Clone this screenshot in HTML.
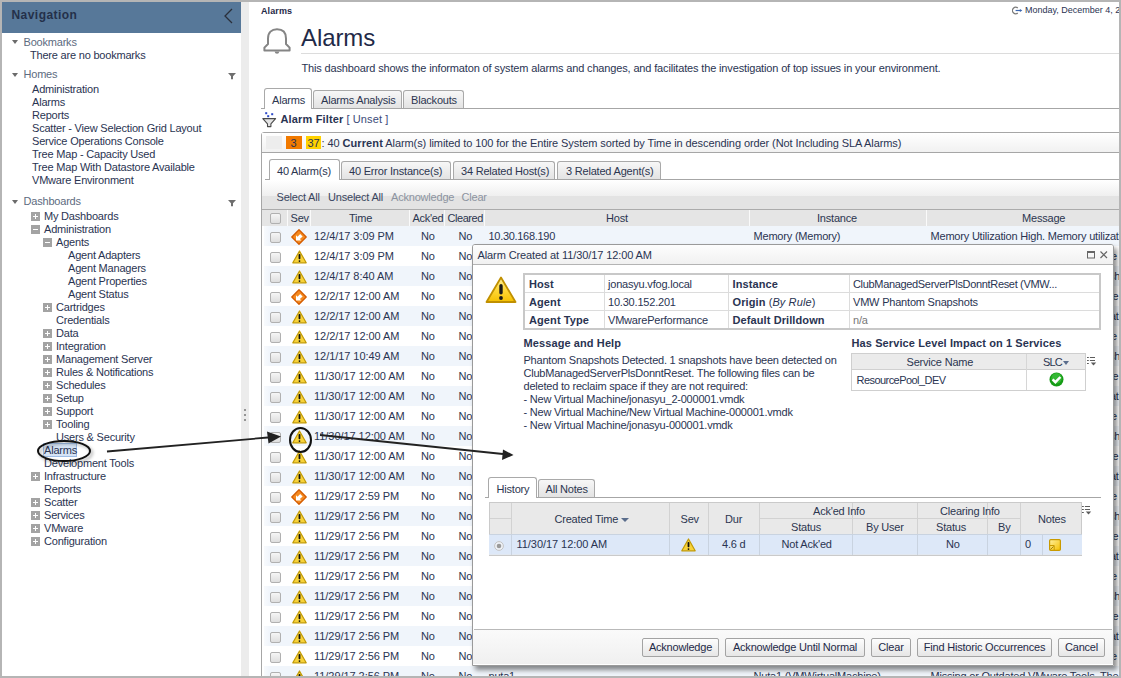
<!DOCTYPE html><html><head><meta charset="utf-8"><style>
*{margin:0;padding:0;box-sizing:border-box}
html,body{width:1121px;height:678px;overflow:hidden;background:#b5b5b5}
body{position:relative;font-family:"Liberation Sans",sans-serif;font-size:11px;color:#2a3452;letter-spacing:-0.2px}
.a{position:absolute}
.t{position:absolute;white-space:nowrap;line-height:13px}
.b,b{font-weight:bold;letter-spacing:0.1px}
.g{color:#5d6b80}
.pm{position:absolute;width:9px;height:9px;background:#a3a3a3}
.pm:before{content:"";position:absolute;left:2px;top:4px;width:5px;height:1px;background:#fff}
.pm.p:after{content:"";position:absolute;left:4px;top:2px;width:1px;height:5px;background:#fff}
.tri{position:absolute;width:0;height:0;border-left:3.5px solid transparent;border-right:3.5px solid transparent;border-top:4px solid #6b6b6b}

.chk{position:absolute;width:11px;height:11px;border:1px solid #b0b0b0;border-radius:2px;background:linear-gradient(#f6f6f6,#dedede)}
.tab{position:absolute;border:1px solid #a9a9a9;border-bottom:none;border-radius:3px 3px 0 0;background:linear-gradient(#f7f7f7,#e3e3e3);color:#2c3650}
.tab.on{background:linear-gradient(#fff,#fff);}
.hl{position:absolute;height:1px;background:#a6a6a6}
.vl{position:absolute;width:1px;background:#a6a6a6}
.btn{position:absolute;height:19px;border:1px solid #a3a3a3;border-radius:2px;background:linear-gradient(#fdfdfd,#e6e6e6);text-align:center;line-height:17px;color:#1f2a48}
</style></head><body>
<div class="a" style="left:2px;top:2px;width:1117px;height:674px;background:#fff"></div>
<div class="a" style="left:2px;top:2px;width:239px;height:31px;background:#577899"></div>
<div class="t b" style="left:11.5px;top:9px;font-size:12px;color:#24304a;letter-spacing:0.45px">Navigation</div>
<svg class="a" style="left:222px;top:7px" width="12" height="18"><path d="M10 2 L3 9 L10 16" fill="none" stroke="#2a2f3a" stroke-width="1.3"/></svg>
<div class="a" style="left:241px;top:2px;width:8px;height:674px;background:#ececec"></div>
<div class="a" style="left:244px;top:408.5px;width:2px;height:2px;background:#777;border-radius:1px"></div>
<div class="a" style="left:244px;top:413.5px;width:2px;height:2px;background:#777;border-radius:1px"></div>
<div class="a" style="left:244px;top:418.5px;width:2px;height:2px;background:#777;border-radius:1px"></div>
<div class="tri" style="left:12px;top:40px"></div>
<div class="t g" style="left:23.5px;top:36px;">Bookmarks</div>
<div class="t " style="left:30px;top:49px;">There are no bookmarks</div>
<div class="tri" style="left:12px;top:73px"></div>
<div class="t g" style="left:23.5px;top:68px;">Homes</div>
<div class="t " style="left:32px;top:83px;">Administration</div>
<div class="t " style="left:32px;top:96px;">Alarms</div>
<div class="t " style="left:32px;top:109px;">Reports</div>
<div class="t " style="left:32px;top:122px;">Scatter - View Selection Grid Layout</div>
<div class="t " style="left:32px;top:135px;">Service Operations Console</div>
<div class="t " style="left:32px;top:148px;">Tree Map - Capacity Used</div>
<div class="t " style="left:32px;top:161px;">Tree Map With Datastore Available</div>
<div class="t " style="left:32px;top:174px;">VMware Environment</div>
<div class="tri" style="left:12px;top:200px"></div>
<div class="t g" style="left:23.5px;top:195px;">Dashboards</div>
<svg class="a" style="left:228px;top:73px" width="9" height="7"><path d="M0 0 H8 L5 3.2 V6.2 H3 V3.2 Z" fill="#6e6e6e"/></svg>
<svg class="a" style="left:228px;top:200px" width="9" height="7"><path d="M0 0 H8 L5 3.2 V6.2 H3 V3.2 Z" fill="#6e6e6e"/></svg>
<div class="pm p" style="left:31px;top:212px"></div>
<div class="t " style="left:44px;top:210px;">My Dashboards</div>
<div class="pm m" style="left:31px;top:225px"></div>
<div class="t " style="left:44px;top:223px;">Administration</div>
<div class="pm m" style="left:43px;top:238px"></div>
<div class="t " style="left:56px;top:236px;">Agents</div>
<div class="t " style="left:68px;top:249px;">Agent Adapters</div>
<div class="t " style="left:68px;top:262px;">Agent Managers</div>
<div class="t " style="left:68px;top:275px;">Agent Properties</div>
<div class="t " style="left:68px;top:288px;">Agent Status</div>
<div class="pm p" style="left:43px;top:303px"></div>
<div class="t " style="left:56px;top:301px;">Cartridges</div>
<div class="t " style="left:56px;top:314px;">Credentials</div>
<div class="pm p" style="left:43px;top:329px"></div>
<div class="t " style="left:56px;top:327px;">Data</div>
<div class="pm p" style="left:43px;top:342px"></div>
<div class="t " style="left:56px;top:340px;">Integration</div>
<div class="pm p" style="left:43px;top:355px"></div>
<div class="t " style="left:56px;top:353px;">Management Server</div>
<div class="pm p" style="left:43px;top:368px"></div>
<div class="t " style="left:56px;top:366px;">Rules &amp; Notifications</div>
<div class="pm p" style="left:43px;top:381px"></div>
<div class="t " style="left:56px;top:379px;">Schedules</div>
<div class="pm p" style="left:43px;top:394px"></div>
<div class="t " style="left:56px;top:392px;">Setup</div>
<div class="pm p" style="left:43px;top:407px"></div>
<div class="t " style="left:56px;top:405px;">Support</div>
<div class="pm p" style="left:43px;top:420px"></div>
<div class="t " style="left:56px;top:418px;">Tooling</div>
<div class="t " style="left:56px;top:431px;">Users &amp; Security</div>
<div class="a" style="left:43px;top:443px;width:34px;height:14px;background:#d5e3f5;border:1px solid #9dbde6"></div>
<div class="t " style="left:44px;top:444px;">Alarms</div>
<div class="t " style="left:44px;top:457px;">Development Tools</div>
<div class="pm p" style="left:31px;top:472px"></div>
<div class="t " style="left:44px;top:470px;">Infrastructure</div>
<div class="t " style="left:44px;top:483px;">Reports</div>
<div class="pm p" style="left:31px;top:498px"></div>
<div class="t " style="left:44px;top:496px;">Scatter</div>
<div class="pm p" style="left:31px;top:511px"></div>
<div class="t " style="left:44px;top:509px;">Services</div>
<div class="pm p" style="left:31px;top:524px"></div>
<div class="t " style="left:44px;top:522px;">VMware</div>
<div class="pm p" style="left:31px;top:537px"></div>
<div class="t " style="left:44px;top:535px;">Configuration</div>
<div class="t b" style="left:261px;top:4.5px;font-size:9px;color:#1f2a48;letter-spacing:0.1px">Alarms</div>
<svg class="a" style="left:1012px;top:6px" width="11" height="9" viewBox="0 0 11 9"><path d="M5.8 2 A3.2 3.3 0 1 0 5.8 7" fill="none" stroke="#7a7a7a" stroke-width="1.2"/><path d="M3.6 4.5 H8.5" stroke="#3a66b0" stroke-width="1.2"/><path d="M7.9 2.9 L10.3 4.5 L7.9 6.1 Z" fill="#3a66b0"/></svg>
<div class="t" style="left:1025px;top:3.7px;font-size:9px;letter-spacing:0px">Monday, December 4, 2017</div>
<svg class="a" style="left:262px;top:27px" width="30" height="28" viewBox="0 0 30 28"><path d="M6 17 V11.5 C6 5.5 9.5 2.3 15 2.3 C20.5 2.3 24 5.5 24 11.5 V17 L27.6 20.6 V23.6 H2.4 V20.6 Z" fill="none" stroke="#858585" stroke-width="2" stroke-linejoin="round"/><path d="M12.6 24.4 H17.4 Q17 26.8 15 26.8 Q13 26.8 12.6 24.4 Z" fill="#858585"/></svg>
<div class="t" style="left:301px;top:25px;font-size:24px;line-height:26px;color:#1f2a48;letter-spacing:-0.1px">Alarms</div>
<div class="hl" style="left:301px;top:53px;width:818px;background:#dcdcdc"></div>
<div class="t " style="left:301.5px;top:61.5px;letter-spacing:-0.15px">This dashboard shows the informaton of system alarms and changes, and facilitates the investigation of top issues in your environment.</div>
<div class="hl" style="left:261px;top:108px;width:858px"></div>
<div class="tab on" style="left:264px;top:88px;width:48px;height:21px"></div>
<div class="tab" style="left:313px;top:90px;width:89px;height:18px"></div>
<div class="tab" style="left:403px;top:90px;width:61px;height:18px"></div>
<div class="t " style="left:272px;top:94px;color:#2c3650">Alarms</div>
<div class="t " style="left:321px;top:94px;color:#2c3650">Alarms Analysis</div>
<div class="t " style="left:411px;top:94px;color:#2c3650">Blackouts</div>
<svg class="a" style="left:262px;top:111px" width="15" height="17" viewBox="0 0 15 17"><rect x="3.2" y="1.2" width="2" height="2" fill="#2a48c8"/><rect x="5.2" y="4.2" width="2" height="2" fill="#2a48c8"/><rect x="9.2" y="2.2" width="2" height="2" fill="#2a48c8"/><path d="M0.8 7.6 H13.6 L8.9 12.9 V15.6 H5.5 V12.9 Z" fill="#e4e4e4" stroke="#4a4a4a" stroke-width="1.1" stroke-linejoin="round"/></svg>
<div class="t " style="left:280.5px;top:113px;"><b style="letter-spacing:0.15px">Alarm Filter</b></div>
<div class="t " style="left:346.5px;top:113px;color:#3b4a78;letter-spacing:0.1px">[ Unset ]</div>
<div class="a" style="left:261px;top:132px;width:870px;height:560px;border:1px solid #a6a6a6;border-radius:3px 0 0 0"></div>
<div class="a" style="left:262px;top:133px;width:857px;height:19px;background:linear-gradient(#fff,#f1f1f1)"></div>
<div class="hl" style="left:262px;top:152px;width:857px"></div>
<div class="a" style="left:266px;top:136px;width:16px;height:13px;background:#ededed"></div>
<div class="a" style="left:286px;top:136px;width:16px;height:13px;background:#f17a00"></div>
<div class="a" style="left:306px;top:136px;width:15px;height:13px;background:#ffd200"></div>
<div class="t " style="left:290.5px;top:136.5px;">3</div>
<div class="t " style="left:307.5px;top:136.5px;">37</div>
<div class="t " style="left:321.5px;top:136.5px;letter-spacing:-0.085px">: 40 <b>Current</b> Alarm(s) limited to 100 for the Entire System sorted by Time in descending order (Not Including SLA Alarms)</div>
<div class="hl" style="left:265px;top:179px;width:854px"></div>
<div class="tab on" style="left:269px;top:159px;width:71px;height:21px"></div>
<div class="tab" style="left:341px;top:161px;width:110px;height:18px"></div>
<div class="tab" style="left:453px;top:161px;width:102px;height:18px"></div>
<div class="tab" style="left:557px;top:161px;width:104px;height:18px"></div>
<div class="t " style="left:277px;top:165px;color:#2c3650">40 Alarm(s)</div>
<div class="t " style="left:349px;top:164.5px;color:#2c3650">40 Error Instance(s)</div>
<div class="t " style="left:461px;top:164.5px;color:#2c3650">34 Related Host(s)</div>
<div class="t " style="left:566px;top:164.5px;color:#2c3650">3 Related Agent(s)</div>
<div class="a" style="left:262px;top:180px;width:857px;height:16px;background:linear-gradient(#fff,#efefef)"></div>
<div class="a" style="left:262px;top:196px;width:857px;height:13px;background:#e3e3e3"></div>
<div class="hl" style="left:262px;top:209px;width:857px;background:#ababab"></div>
<div class="t " style="left:276.5px;top:191px;color:#3a4660">Select All</div>
<div class="t " style="left:328px;top:191px;color:#3a4660">Unselect All</div>
<div class="t " style="left:391px;top:191px;color:#8c93a0">Acknowledge</div>
<div class="t " style="left:461.5px;top:191px;color:#8c93a0">Clear</div>
<div class="a" style="left:262px;top:210px;width:857px;height:16px;background:#e5e5e5"></div>
<div class="a" style="left:287px;top:210px;width:1px;height:16px;background:#fafafa"></div>
<div class="a" style="left:310px;top:210px;width:1px;height:16px;background:#fafafa"></div>
<div class="a" style="left:409px;top:210px;width:1px;height:16px;background:#fafafa"></div>
<div class="a" style="left:444px;top:210px;width:1px;height:16px;background:#fafafa"></div>
<div class="a" style="left:484px;top:210px;width:1px;height:16px;background:#fafafa"></div>
<div class="a" style="left:749px;top:210px;width:1px;height:16px;background:#fafafa"></div>
<div class="a" style="left:926px;top:210px;width:1px;height:16px;background:#fafafa"></div>
<div class="chk" style="left:270px;top:213px"></div>
<div class="t " style="left:290.5px;top:211.5px;color:#2c3650">Sev</div>
<div class="t " style="left:349px;top:211.5px;color:#2c3650">Time</div>
<div class="t " style="left:412.5px;top:211.5px;color:#2c3650;letter-spacing:-0.3px">Ack'ed</div>
<div class="t " style="left:447.5px;top:211.5px;color:#2c3650;letter-spacing:-0.45px">Cleared</div>
<div class="t " style="left:606px;top:211.5px;color:#2c3650">Host</div>
<div class="t " style="left:817px;top:211.5px;color:#2c3650">Instance</div>
<div class="t " style="left:1022px;top:211.5px;color:#2c3650">Message</div>
<div class="a" style="left:264px;top:226px;width:855px;height:20px;background:linear-gradient(90deg,#f8fafd,#f0f5fb 6px)"></div>
<div class="chk" style="left:270px;top:232px"></div>
<svg class="a" style="left:291px;top:229px" width="16" height="16" viewBox="0 0 16 16"><path d="M8 0.8 L15.2 8 L8 15.2 L0.8 8 Z" fill="#f58a1f" stroke="#d45c00" stroke-width="1.3" stroke-linejoin="round"/><path d="M5 6.2 L5 11.6 L10.4 11.6 L8.9 10.1 L11.6 7.4 L9.2 5 L6.5 7.7 Z" fill="#fff"/></svg>
<div class="t " style="left:314px;top:229.5px;letter-spacing:-0.05px">12/4/17 3:09 PM</div>
<div class="t " style="left:421px;top:229.5px;">No</div>
<div class="t " style="left:458.5px;top:229.5px;">No</div>
<div class="chk" style="left:270px;top:252px"></div>
<svg class="a" style="left:292px;top:250px" width="15" height="14" viewBox="0 0 15 14"><path d="M7.5 1 L14.2 12.8 H0.8 Z" fill="#f7d23a" stroke="#c29a05" stroke-width="1.2" stroke-linejoin="round"/><rect x="6.6" y="4" width="1.8" height="5.2" rx="0.8" fill="#111"/><rect x="6.6" y="10.2" width="1.8" height="1.8" rx="0.9" fill="#111"/></svg>
<div class="t " style="left:314px;top:249.5px;letter-spacing:-0.05px">12/4/17 3:09 PM</div>
<div class="t " style="left:421px;top:249.5px;">No</div>
<div class="t " style="left:458.5px;top:249.5px;">No</div>
<div class="t " style="left:930.5px;top:249.5px;">Snapshot age exceeds threshold on the virtual machine</div>
<div class="a" style="left:264px;top:266px;width:855px;height:20px;background:linear-gradient(90deg,#f8fafd,#f0f5fb 6px)"></div>
<div class="chk" style="left:270px;top:272px"></div>
<svg class="a" style="left:292px;top:270px" width="15" height="14" viewBox="0 0 15 14"><path d="M7.5 1 L14.2 12.8 H0.8 Z" fill="#f7d23a" stroke="#c29a05" stroke-width="1.2" stroke-linejoin="round"/><rect x="6.6" y="4" width="1.8" height="5.2" rx="0.8" fill="#111"/><rect x="6.6" y="10.2" width="1.8" height="1.8" rx="0.9" fill="#111"/></svg>
<div class="t " style="left:314px;top:269.5px;letter-spacing:-0.05px">12/4/17 8:40 AM</div>
<div class="t " style="left:421px;top:269.5px;">No</div>
<div class="t " style="left:458.5px;top:269.5px;">No</div>
<div class="t " style="left:930.5px;top:269.5px;">Phantom Snapshots Detected. 1 snapshots have</div>
<div class="chk" style="left:270px;top:292px"></div>
<svg class="a" style="left:291px;top:289px" width="16" height="16" viewBox="0 0 16 16"><path d="M8 0.8 L15.2 8 L8 15.2 L0.8 8 Z" fill="#f58a1f" stroke="#d45c00" stroke-width="1.3" stroke-linejoin="round"/><path d="M5 6.2 L5 11.6 L10.4 11.6 L8.9 10.1 L11.6 7.4 L9.2 5 L6.5 7.7 Z" fill="#fff"/></svg>
<div class="t " style="left:314px;top:289.5px;letter-spacing:-0.05px">12/2/17 12:00 AM</div>
<div class="t " style="left:421px;top:289.5px;">No</div>
<div class="t " style="left:458.5px;top:289.5px;">No</div>
<div class="t " style="left:930.5px;top:289.5px;">Missing or Outdated VMware Tools. The VMware tools xxx</div>
<div class="a" style="left:264px;top:306px;width:855px;height:20px;background:linear-gradient(90deg,#f8fafd,#f0f5fb 6px)"></div>
<div class="chk" style="left:270px;top:312px"></div>
<svg class="a" style="left:292px;top:310px" width="15" height="14" viewBox="0 0 15 14"><path d="M7.5 1 L14.2 12.8 H0.8 Z" fill="#f7d23a" stroke="#c29a05" stroke-width="1.2" stroke-linejoin="round"/><rect x="6.6" y="4" width="1.8" height="5.2" rx="0.8" fill="#111"/><rect x="6.6" y="10.2" width="1.8" height="1.8" rx="0.9" fill="#111"/></svg>
<div class="t " style="left:314px;top:309.5px;letter-spacing:-0.05px">12/2/17 12:00 AM</div>
<div class="t " style="left:421px;top:309.5px;">No</div>
<div class="t " style="left:458.5px;top:309.5px;">No</div>
<div class="t " style="left:930.5px;top:309.5px;">Memory Utilization High. Memory utilization</div>
<div class="chk" style="left:270px;top:332px"></div>
<svg class="a" style="left:292px;top:330px" width="15" height="14" viewBox="0 0 15 14"><path d="M7.5 1 L14.2 12.8 H0.8 Z" fill="#f7d23a" stroke="#c29a05" stroke-width="1.2" stroke-linejoin="round"/><rect x="6.6" y="4" width="1.8" height="5.2" rx="0.8" fill="#111"/><rect x="6.6" y="10.2" width="1.8" height="1.8" rx="0.9" fill="#111"/></svg>
<div class="t " style="left:314px;top:329.5px;letter-spacing:-0.05px">12/2/17 12:00 AM</div>
<div class="t " style="left:421px;top:329.5px;">No</div>
<div class="t " style="left:458.5px;top:329.5px;">No</div>
<div class="t " style="left:930.5px;top:329.5px;">Snapshot age exceeds threshold on the virtual machine</div>
<div class="a" style="left:264px;top:346px;width:855px;height:20px;background:linear-gradient(90deg,#f8fafd,#f0f5fb 6px)"></div>
<div class="chk" style="left:270px;top:352px"></div>
<svg class="a" style="left:292px;top:350px" width="15" height="14" viewBox="0 0 15 14"><path d="M7.5 1 L14.2 12.8 H0.8 Z" fill="#f7d23a" stroke="#c29a05" stroke-width="1.2" stroke-linejoin="round"/><rect x="6.6" y="4" width="1.8" height="5.2" rx="0.8" fill="#111"/><rect x="6.6" y="10.2" width="1.8" height="1.8" rx="0.9" fill="#111"/></svg>
<div class="t " style="left:314px;top:349.5px;letter-spacing:-0.05px">12/1/17 10:49 AM</div>
<div class="t " style="left:421px;top:349.5px;">No</div>
<div class="t " style="left:458.5px;top:349.5px;">No</div>
<div class="t " style="left:930.5px;top:349.5px;">Phantom Snapshots Detected. 1 snapshots have</div>
<div class="chk" style="left:270px;top:372px"></div>
<svg class="a" style="left:292px;top:370px" width="15" height="14" viewBox="0 0 15 14"><path d="M7.5 1 L14.2 12.8 H0.8 Z" fill="#f7d23a" stroke="#c29a05" stroke-width="1.2" stroke-linejoin="round"/><rect x="6.6" y="4" width="1.8" height="5.2" rx="0.8" fill="#111"/><rect x="6.6" y="10.2" width="1.8" height="1.8" rx="0.9" fill="#111"/></svg>
<div class="t " style="left:314px;top:369.5px;letter-spacing:-0.05px">11/30/17 12:00 AM</div>
<div class="t " style="left:421px;top:369.5px;">No</div>
<div class="t " style="left:458.5px;top:369.5px;">No</div>
<div class="t " style="left:930.5px;top:369.5px;">Missing or Outdated VMware Tools. The VMware tools xxx</div>
<div class="a" style="left:264px;top:386px;width:855px;height:20px;background:linear-gradient(90deg,#f8fafd,#f0f5fb 6px)"></div>
<div class="chk" style="left:270px;top:392px"></div>
<svg class="a" style="left:292px;top:390px" width="15" height="14" viewBox="0 0 15 14"><path d="M7.5 1 L14.2 12.8 H0.8 Z" fill="#f7d23a" stroke="#c29a05" stroke-width="1.2" stroke-linejoin="round"/><rect x="6.6" y="4" width="1.8" height="5.2" rx="0.8" fill="#111"/><rect x="6.6" y="10.2" width="1.8" height="1.8" rx="0.9" fill="#111"/></svg>
<div class="t " style="left:314px;top:389.5px;letter-spacing:-0.05px">11/30/17 12:00 AM</div>
<div class="t " style="left:421px;top:389.5px;">No</div>
<div class="t " style="left:458.5px;top:389.5px;">No</div>
<div class="t " style="left:930.5px;top:389.5px;">Memory Utilization High. Memory utilization</div>
<div class="chk" style="left:270px;top:412px"></div>
<svg class="a" style="left:292px;top:410px" width="15" height="14" viewBox="0 0 15 14"><path d="M7.5 1 L14.2 12.8 H0.8 Z" fill="#f7d23a" stroke="#c29a05" stroke-width="1.2" stroke-linejoin="round"/><rect x="6.6" y="4" width="1.8" height="5.2" rx="0.8" fill="#111"/><rect x="6.6" y="10.2" width="1.8" height="1.8" rx="0.9" fill="#111"/></svg>
<div class="t " style="left:314px;top:409.5px;letter-spacing:-0.05px">11/30/17 12:00 AM</div>
<div class="t " style="left:421px;top:409.5px;">No</div>
<div class="t " style="left:458.5px;top:409.5px;">No</div>
<div class="t " style="left:930.5px;top:409.5px;">Snapshot age exceeds threshold on the virtual machine</div>
<div class="a" style="left:264px;top:426px;width:855px;height:20px;background:linear-gradient(90deg,#f8fafd,#f0f5fb 6px)"></div>
<div class="chk" style="left:270px;top:432px"></div>
<svg class="a" style="left:292px;top:430px" width="15" height="14" viewBox="0 0 15 14"><path d="M7.5 1 L14.2 12.8 H0.8 Z" fill="#f7d23a" stroke="#c29a05" stroke-width="1.2" stroke-linejoin="round"/><rect x="6.6" y="4" width="1.8" height="5.2" rx="0.8" fill="#111"/><rect x="6.6" y="10.2" width="1.8" height="1.8" rx="0.9" fill="#111"/></svg>
<div class="t " style="left:314px;top:429.5px;letter-spacing:-0.05px">11/30/17 12:00 AM</div>
<div class="t " style="left:421px;top:429.5px;">No</div>
<div class="t " style="left:458.5px;top:429.5px;">No</div>
<div class="t " style="left:930.5px;top:429.5px;">Phantom Snapshots Detected. 1 snapshots have</div>
<div class="chk" style="left:270px;top:452px"></div>
<svg class="a" style="left:292px;top:450px" width="15" height="14" viewBox="0 0 15 14"><path d="M7.5 1 L14.2 12.8 H0.8 Z" fill="#f7d23a" stroke="#c29a05" stroke-width="1.2" stroke-linejoin="round"/><rect x="6.6" y="4" width="1.8" height="5.2" rx="0.8" fill="#111"/><rect x="6.6" y="10.2" width="1.8" height="1.8" rx="0.9" fill="#111"/></svg>
<div class="t " style="left:314px;top:449.5px;letter-spacing:-0.05px">11/30/17 12:00 AM</div>
<div class="t " style="left:421px;top:449.5px;">No</div>
<div class="t " style="left:458.5px;top:449.5px;">No</div>
<div class="t " style="left:930.5px;top:449.5px;">Missing or Outdated VMware Tools. The VMware tools xxx</div>
<div class="a" style="left:264px;top:466px;width:855px;height:20px;background:linear-gradient(90deg,#f8fafd,#f0f5fb 6px)"></div>
<div class="chk" style="left:270px;top:472px"></div>
<svg class="a" style="left:292px;top:470px" width="15" height="14" viewBox="0 0 15 14"><path d="M7.5 1 L14.2 12.8 H0.8 Z" fill="#f7d23a" stroke="#c29a05" stroke-width="1.2" stroke-linejoin="round"/><rect x="6.6" y="4" width="1.8" height="5.2" rx="0.8" fill="#111"/><rect x="6.6" y="10.2" width="1.8" height="1.8" rx="0.9" fill="#111"/></svg>
<div class="t " style="left:314px;top:469.5px;letter-spacing:-0.05px">11/30/17 12:00 AM</div>
<div class="t " style="left:421px;top:469.5px;">No</div>
<div class="t " style="left:458.5px;top:469.5px;">No</div>
<div class="t " style="left:930.5px;top:469.5px;">Memory Utilization High. Memory utilization</div>
<div class="chk" style="left:270px;top:492px"></div>
<svg class="a" style="left:291px;top:489px" width="16" height="16" viewBox="0 0 16 16"><path d="M8 0.8 L15.2 8 L8 15.2 L0.8 8 Z" fill="#f58a1f" stroke="#d45c00" stroke-width="1.3" stroke-linejoin="round"/><path d="M5 6.2 L5 11.6 L10.4 11.6 L8.9 10.1 L11.6 7.4 L9.2 5 L6.5 7.7 Z" fill="#fff"/></svg>
<div class="t " style="left:314px;top:489.5px;letter-spacing:-0.05px">11/29/17 2:59 PM</div>
<div class="t " style="left:421px;top:489.5px;">No</div>
<div class="t " style="left:458.5px;top:489.5px;">No</div>
<div class="t " style="left:930.5px;top:489.5px;">Snapshot age exceeds threshold on the virtual machine</div>
<div class="a" style="left:264px;top:506px;width:855px;height:20px;background:linear-gradient(90deg,#f8fafd,#f0f5fb 6px)"></div>
<div class="chk" style="left:270px;top:512px"></div>
<svg class="a" style="left:292px;top:510px" width="15" height="14" viewBox="0 0 15 14"><path d="M7.5 1 L14.2 12.8 H0.8 Z" fill="#f7d23a" stroke="#c29a05" stroke-width="1.2" stroke-linejoin="round"/><rect x="6.6" y="4" width="1.8" height="5.2" rx="0.8" fill="#111"/><rect x="6.6" y="10.2" width="1.8" height="1.8" rx="0.9" fill="#111"/></svg>
<div class="t " style="left:314px;top:509.5px;letter-spacing:-0.05px">11/29/17 2:56 PM</div>
<div class="t " style="left:421px;top:509.5px;">No</div>
<div class="t " style="left:458.5px;top:509.5px;">No</div>
<div class="t " style="left:930.5px;top:509.5px;">Phantom Snapshots Detected. 1 snapshots have</div>
<div class="chk" style="left:270px;top:532px"></div>
<svg class="a" style="left:292px;top:530px" width="15" height="14" viewBox="0 0 15 14"><path d="M7.5 1 L14.2 12.8 H0.8 Z" fill="#f7d23a" stroke="#c29a05" stroke-width="1.2" stroke-linejoin="round"/><rect x="6.6" y="4" width="1.8" height="5.2" rx="0.8" fill="#111"/><rect x="6.6" y="10.2" width="1.8" height="1.8" rx="0.9" fill="#111"/></svg>
<div class="t " style="left:314px;top:529.5px;letter-spacing:-0.05px">11/29/17 2:56 PM</div>
<div class="t " style="left:421px;top:529.5px;">No</div>
<div class="t " style="left:458.5px;top:529.5px;">No</div>
<div class="t " style="left:930.5px;top:529.5px;">Missing or Outdated VMware Tools. The VMware tools xxx</div>
<div class="a" style="left:264px;top:546px;width:855px;height:20px;background:linear-gradient(90deg,#f8fafd,#f0f5fb 6px)"></div>
<div class="chk" style="left:270px;top:552px"></div>
<svg class="a" style="left:292px;top:550px" width="15" height="14" viewBox="0 0 15 14"><path d="M7.5 1 L14.2 12.8 H0.8 Z" fill="#f7d23a" stroke="#c29a05" stroke-width="1.2" stroke-linejoin="round"/><rect x="6.6" y="4" width="1.8" height="5.2" rx="0.8" fill="#111"/><rect x="6.6" y="10.2" width="1.8" height="1.8" rx="0.9" fill="#111"/></svg>
<div class="t " style="left:314px;top:549.5px;letter-spacing:-0.05px">11/29/17 2:56 PM</div>
<div class="t " style="left:421px;top:549.5px;">No</div>
<div class="t " style="left:458.5px;top:549.5px;">No</div>
<div class="t " style="left:930.5px;top:549.5px;">Memory Utilization High. Memory utilization</div>
<div class="chk" style="left:270px;top:572px"></div>
<svg class="a" style="left:292px;top:570px" width="15" height="14" viewBox="0 0 15 14"><path d="M7.5 1 L14.2 12.8 H0.8 Z" fill="#f7d23a" stroke="#c29a05" stroke-width="1.2" stroke-linejoin="round"/><rect x="6.6" y="4" width="1.8" height="5.2" rx="0.8" fill="#111"/><rect x="6.6" y="10.2" width="1.8" height="1.8" rx="0.9" fill="#111"/></svg>
<div class="t " style="left:314px;top:569.5px;letter-spacing:-0.05px">11/29/17 2:56 PM</div>
<div class="t " style="left:421px;top:569.5px;">No</div>
<div class="t " style="left:458.5px;top:569.5px;">No</div>
<div class="t " style="left:930.5px;top:569.5px;">Snapshot age exceeds threshold on the virtual machine</div>
<div class="a" style="left:264px;top:586px;width:855px;height:20px;background:linear-gradient(90deg,#f8fafd,#f0f5fb 6px)"></div>
<div class="chk" style="left:270px;top:592px"></div>
<svg class="a" style="left:292px;top:590px" width="15" height="14" viewBox="0 0 15 14"><path d="M7.5 1 L14.2 12.8 H0.8 Z" fill="#f7d23a" stroke="#c29a05" stroke-width="1.2" stroke-linejoin="round"/><rect x="6.6" y="4" width="1.8" height="5.2" rx="0.8" fill="#111"/><rect x="6.6" y="10.2" width="1.8" height="1.8" rx="0.9" fill="#111"/></svg>
<div class="t " style="left:314px;top:589.5px;letter-spacing:-0.05px">11/29/17 2:56 PM</div>
<div class="t " style="left:421px;top:589.5px;">No</div>
<div class="t " style="left:458.5px;top:589.5px;">No</div>
<div class="t " style="left:930.5px;top:589.5px;">Phantom Snapshots Detected. 1 snapshots have</div>
<div class="chk" style="left:270px;top:612px"></div>
<svg class="a" style="left:292px;top:610px" width="15" height="14" viewBox="0 0 15 14"><path d="M7.5 1 L14.2 12.8 H0.8 Z" fill="#f7d23a" stroke="#c29a05" stroke-width="1.2" stroke-linejoin="round"/><rect x="6.6" y="4" width="1.8" height="5.2" rx="0.8" fill="#111"/><rect x="6.6" y="10.2" width="1.8" height="1.8" rx="0.9" fill="#111"/></svg>
<div class="t " style="left:314px;top:609.5px;letter-spacing:-0.05px">11/29/17 2:56 PM</div>
<div class="t " style="left:421px;top:609.5px;">No</div>
<div class="t " style="left:458.5px;top:609.5px;">No</div>
<div class="t " style="left:930.5px;top:609.5px;">Missing or Outdated VMware Tools. The VMware tools xxx</div>
<div class="a" style="left:264px;top:626px;width:855px;height:20px;background:linear-gradient(90deg,#f8fafd,#f0f5fb 6px)"></div>
<div class="chk" style="left:270px;top:632px"></div>
<svg class="a" style="left:292px;top:630px" width="15" height="14" viewBox="0 0 15 14"><path d="M7.5 1 L14.2 12.8 H0.8 Z" fill="#f7d23a" stroke="#c29a05" stroke-width="1.2" stroke-linejoin="round"/><rect x="6.6" y="4" width="1.8" height="5.2" rx="0.8" fill="#111"/><rect x="6.6" y="10.2" width="1.8" height="1.8" rx="0.9" fill="#111"/></svg>
<div class="t " style="left:314px;top:629.5px;letter-spacing:-0.05px">11/29/17 2:56 PM</div>
<div class="t " style="left:421px;top:629.5px;">No</div>
<div class="t " style="left:458.5px;top:629.5px;">No</div>
<div class="t " style="left:930.5px;top:629.5px;">Memory Utilization High. Memory utilization</div>
<div class="chk" style="left:270px;top:652px"></div>
<svg class="a" style="left:292px;top:650px" width="15" height="14" viewBox="0 0 15 14"><path d="M7.5 1 L14.2 12.8 H0.8 Z" fill="#f7d23a" stroke="#c29a05" stroke-width="1.2" stroke-linejoin="round"/><rect x="6.6" y="4" width="1.8" height="5.2" rx="0.8" fill="#111"/><rect x="6.6" y="10.2" width="1.8" height="1.8" rx="0.9" fill="#111"/></svg>
<div class="t " style="left:314px;top:649.5px;letter-spacing:-0.05px">11/29/17 2:56 PM</div>
<div class="t " style="left:421px;top:649.5px;">No</div>
<div class="t " style="left:458.5px;top:649.5px;">No</div>
<div class="t " style="left:930.5px;top:649.5px;">Snapshot age exceeds threshold on the virtual machine</div>
<div class="a" style="left:264px;top:666px;width:855px;height:20px;background:linear-gradient(90deg,#f8fafd,#f0f5fb 6px)"></div>
<div class="chk" style="left:270px;top:672px"></div>
<svg class="a" style="left:292px;top:670px" width="15" height="14" viewBox="0 0 15 14"><path d="M7.5 1 L14.2 12.8 H0.8 Z" fill="#f7d23a" stroke="#c29a05" stroke-width="1.2" stroke-linejoin="round"/><rect x="6.6" y="4" width="1.8" height="5.2" rx="0.8" fill="#111"/><rect x="6.6" y="10.2" width="1.8" height="1.8" rx="0.9" fill="#111"/></svg>
<div class="t " style="left:314px;top:669.5px;letter-spacing:-0.05px">11/29/17 2:56 PM</div>
<div class="t " style="left:421px;top:669.5px;">No</div>
<div class="t " style="left:458.5px;top:669.5px;">No</div>
<div class="t " style="left:488.5px;top:229.5px;letter-spacing:-0.3px">10.30.168.190</div>
<div class="t " style="left:753.5px;top:229.5px;">Memory (Memory)</div>
<div class="t " style="left:930.5px;top:229.5px;">Memory Utilization High. Memory utilization is above threshold</div>
<div class="t " style="left:488.5px;top:669.5px;">nuta1</div>
<div class="t " style="left:753.5px;top:669.5px;">Nuta1 (VMWirtualMachine)</div>
<div class="t " style="left:930.5px;top:669.5px;">Missing or Outdated VMware Tools. The VMware tools</div>
<div class="a" style="left:472px;top:244px;width:642px;height:422px;border-radius:3px 3px 0 0;box-shadow:3px 4px 5px rgba(0,0,0,0.45)"></div>
<div class="a" style="left:472px;top:244px;width:642px;height:422px;background:#fff;border:1px solid #9a9a9a;border-radius:3px 3px 0 0"></div>
<div class="a" style="left:473px;top:245px;width:640px;height:19px;background:linear-gradient(#fdfdfd,#f1f1f1);border-radius:2px 2px 0 0"></div>
<div class="hl" style="left:473px;top:264px;width:640px;background:#b4b4b4"></div>
<div class="t " style="left:477.5px;top:249px;letter-spacing:-0.1px">Alarm Created at 11/30/17 12:00 AM</div>
<svg class="a" style="left:1086px;top:250px" width="23" height="10"><rect x="1.5" y="1.5" width="7" height="6.5" fill="none" stroke="#666" stroke-width="1"/><rect x="1" y="1" width="8" height="2" fill="#666"/><path d="M14.5 1.5 L21 8 M21 1.5 L14.5 8" stroke="#666" stroke-width="1.2"/></svg>
<svg class="a" style="left:485px;top:276px" width="32" height="28" viewBox="0 0 32 28"><defs><linearGradient id="wg" x1="0" y1="0" x2="0" y2="1"><stop offset="0" stop-color="#fff3a0"/><stop offset="0.5" stop-color="#ffd83a"/><stop offset="1" stop-color="#f5c000"/></linearGradient></defs><path d="M16 1.5 L30.5 26 H1.5 Z" fill="url(#wg)" stroke="#c09000" stroke-width="1.8" stroke-linejoin="round"/><rect x="14.3" y="8" width="3.4" height="10.5" rx="1.7" fill="#1a1a1a"/><circle cx="16" cy="22" r="1.9" fill="#1a1a1a"/></svg>
<div class="a" style="left:523px;top:273px;width:578px;height:57px;border:2px solid #c8c8c8"></div>
<div class="hl" style="left:525px;top:292px;width:574px;background:#dcdcdc"></div>
<div class="hl" style="left:525px;top:310px;width:574px;background:#dcdcdc"></div>
<div class="vl" style="left:604px;top:275px;height:53px;background:#dcdcdc"></div>
<div class="vl" style="left:728px;top:275px;height:53px;background:#dcdcdc"></div>
<div class="vl" style="left:849px;top:275px;height:53px;background:#dcdcdc"></div>
<div class="t b" style="left:529px;top:277.5px;">Host</div>
<div class="t " style="left:608px;top:277.5px;">jonasyu.vfog.local</div>
<div class="t b" style="left:732.5px;top:277.5px;">Instance</div>
<div class="t " style="left:853px;top:277.5px;"><span style="letter-spacing:-0.33px">ClubManagedServerPlsDonntReset (VMW...</span></div>
<div class="t b" style="left:529px;top:295.5px;">Agent</div>
<div class="t " style="left:608px;top:295.5px;">10.30.152.201</div>
<div class="t b" style="left:732.5px;top:295.5px;">Origin <span style="font-weight:normal">(<i>By Rule</i>)</span></div>
<div class="t " style="left:853px;top:295.5px;">VMW Phantom Snapshots</div>
<div class="t b" style="left:529px;top:313.5px;">Agent Type</div>
<div class="t " style="left:608px;top:313.5px;">VMwarePerformance</div>
<div class="t b" style="left:732.5px;top:313.5px;">Default Drilldown</div>
<div class="t " style="left:853px;top:313.5px;"><span style="color:#777">n/a</span></div>
<div class="t b" style="left:523.5px;top:337px;">Message and Help</div>
<div class="t " style="left:523.5px;top:353.5px;letter-spacing:-0.22px">Phantom Snapshots Detected. 1 snapshots have been detected on</div>
<div class="t " style="left:523.5px;top:366.5px;letter-spacing:-0.22px">ClubManagedServerPlsDonntReset. The following files can be</div>
<div class="t " style="left:523.5px;top:379.5px;letter-spacing:-0.22px">deleted to reclaim space if they are not required:</div>
<div class="t " style="left:523.5px;top:392.5px;letter-spacing:-0.22px">- New Virtual Machine/jonasyu_2-000001.vmdk</div>
<div class="t " style="left:523.5px;top:405.5px;letter-spacing:-0.22px">- New Virtual Machine/New Virtual Machine-000001.vmdk</div>
<div class="t " style="left:523.5px;top:418.5px;letter-spacing:-0.22px">- New Virtual Machine/jonasyu-000001.vmdk</div>
<div class="t b" style="left:851.5px;top:336.5px;">Has Service Level Impact on 1 Services</div>
<div class="a" style="left:851px;top:353px;width:235px;height:38px;border:1px solid #cfcfcf"></div>
<div class="a" style="left:852px;top:354px;width:233px;height:15px;background:#ebebeb"></div>
<div class="hl" style="left:852px;top:369px;width:233px;background:#d0d0d0"></div>
<div class="vl" style="left:1026px;top:354px;height:36px;background:#d6d6d6"></div>
<div class="t " style="left:906.5px;top:356px;color:#2c3650">Service Name</div>
<div class="t " style="left:1043px;top:356px;color:#2c3650;letter-spacing:-0.9px">SLC</div>
<div class="tri" style="left:1063px;top:361px;border-top-color:#5a6d8c;border-left-width:3.5px;border-right-width:3.5px;border-top-width:4.5px"></div>
<div class="t " style="left:856.5px;top:373.5px;letter-spacing:-0.55px">ResourcePool_DEV</div>
<svg class="a" style="left:1049px;top:372px" width="15" height="15" viewBox="0 0 15 15"><circle cx="7.5" cy="7.5" r="7" fill="#169c16"/><circle cx="7.5" cy="6.2" r="5.2" fill="#4fd04f" opacity="0.55"/><path d="M3.6 7.4 L6.4 10.2 L11.4 5" fill="none" stroke="#fff" stroke-width="2.5"/></svg>
<svg class="a" style="left:1087px;top:356px" width="10" height="10"><path d="M0 1.5 H1.8 M2.9 1.5 H8 M0 4.5 H1.8 M2.9 4.5 H8 M0 7.5 H1.8" stroke="#5c5c5c" stroke-width="1"/><path d="M3.8 6.6 H9.2 L6.5 9.4 Z" fill="#5c5c5c"/></svg>
<svg class="a" style="left:1082px;top:505px" width="10" height="10"><path d="M0 1.5 H1.8 M2.9 1.5 H8 M0 4.5 H1.8 M2.9 4.5 H8 M0 7.5 H1.8" stroke="#5c5c5c" stroke-width="1"/><path d="M3.8 6.6 H9.2 L6.5 9.4 Z" fill="#5c5c5c"/></svg>
<div class="hl" style="left:485px;top:497px;width:616px"></div>
<div class="tab on" style="left:488px;top:477px;width:49px;height:21px"></div>
<div class="tab" style="left:538px;top:479px;width:57px;height:18px"></div>
<div class="t " style="left:496.5px;top:482.5px;color:#2c3650">History</div>
<div class="t " style="left:545.5px;top:483px;color:#2c3650">All Notes</div>
<div class="a" style="left:489px;top:502px;width:593px;height:54px;border:1px solid #cacaca"></div>
<div class="a" style="left:490px;top:503px;width:591px;height:31px;background:#e9e9e9"></div>
<div class="a" style="left:489px;top:534px;width:593px;height:21px;background:#dde8f8;border-top:1px solid #c9d3e0;border-bottom:1px solid #e2e8f0"></div>
<div class="a" style="left:511px;top:503px;width:1px;height:31px;background:#d2d2d2"></div>
<div class="a" style="left:511px;top:535px;width:1px;height:20px;background:#c9d3e0"></div>
<div class="a" style="left:669px;top:503px;width:1px;height:31px;background:#d2d2d2"></div>
<div class="a" style="left:669px;top:535px;width:1px;height:20px;background:#c9d3e0"></div>
<div class="a" style="left:708px;top:503px;width:1px;height:31px;background:#d2d2d2"></div>
<div class="a" style="left:708px;top:535px;width:1px;height:20px;background:#c9d3e0"></div>
<div class="a" style="left:759px;top:503px;width:1px;height:31px;background:#d2d2d2"></div>
<div class="a" style="left:759px;top:535px;width:1px;height:20px;background:#c9d3e0"></div>
<div class="a" style="left:852px;top:503px;width:1px;height:31px;background:#d2d2d2"></div>
<div class="a" style="left:852px;top:535px;width:1px;height:20px;background:#c9d3e0"></div>
<div class="a" style="left:917px;top:503px;width:1px;height:31px;background:#d2d2d2"></div>
<div class="a" style="left:917px;top:535px;width:1px;height:20px;background:#c9d3e0"></div>
<div class="a" style="left:987px;top:503px;width:1px;height:31px;background:#d2d2d2"></div>
<div class="a" style="left:987px;top:535px;width:1px;height:20px;background:#c9d3e0"></div>
<div class="a" style="left:1020px;top:503px;width:1px;height:31px;background:#d2d2d2"></div>
<div class="a" style="left:1020px;top:535px;width:1px;height:20px;background:#c9d3e0"></div>
<div class="a" style="left:1042px;top:535px;width:1px;height:20px;background:#c9d3e0"></div>
<div class="a" style="left:490px;top:518px;width:21px;height:1px;background:#d2d2d2"></div>
<div class="a" style="left:759px;top:518px;width:261px;height:1px;background:#d2d2d2"></div>
<div class="t " style="left:554.5px;top:513px;color:#2c3650">Created Time</div>
<div class="tri" style="left:621px;top:518px;border-top-color:#5a6d8c;border-left-width:4px;border-right-width:4px"></div>
<div class="t " style="left:680.5px;top:513px;color:#2c3650">Sev</div>
<div class="t " style="left:725px;top:513px;color:#2c3650">Dur</div>
<div class="t " style="left:813px;top:504.5px;color:#2c3650">Ack'ed Info</div>
<div class="t " style="left:791px;top:521px;color:#2c3650">Status</div>
<div class="t " style="left:866px;top:521px;color:#2c3650">By User</div>
<div class="t " style="left:940px;top:504.5px;color:#2c3650">Clearing Info</div>
<div class="t " style="left:936px;top:521px;color:#2c3650">Status</div>
<div class="t " style="left:998px;top:521px;color:#2c3650">By</div>
<div class="t " style="left:1038px;top:513px;color:#2c3650">Notes</div>
<svg class="a" style="left:493px;top:540px" width="12" height="12"><circle cx="6" cy="6" r="4.4" fill="#eef1f6" stroke="#c4c4c4"/><circle cx="6" cy="6" r="2.3" fill="#9a9a9a"/></svg>
<div class="t " style="left:516.5px;top:538px;letter-spacing:-0.05px">11/30/17 12:00 AM</div>
<svg class="a" style="left:681px;top:538px" width="15" height="14" viewBox="0 0 15 14"><path d="M7.5 1 L14.2 12.8 H0.8 Z" fill="#f7d23a" stroke="#c29a05" stroke-width="1.2" stroke-linejoin="round"/><rect x="6.6" y="4" width="1.8" height="5.2" rx="0.8" fill="#111"/><rect x="6.6" y="10.2" width="1.8" height="1.8" rx="0.9" fill="#111"/></svg>
<div class="t " style="left:722px;top:538px;">4.6 d</div>
<div class="t " style="left:781.5px;top:538px;">Not Ack'ed</div>
<div class="t " style="left:946px;top:538px;">No</div>
<div class="t " style="left:1025px;top:538px;">0</div>
<svg class="a" style="left:1049px;top:539px" width="12" height="12"><defs><linearGradient id="ng" x1="0" y1="0" x2="1" y2="1"><stop offset="0" stop-color="#fff0a0"/><stop offset="1" stop-color="#f5c000"/></linearGradient></defs><rect x="0.6" y="0.6" width="10.8" height="10.8" rx="1.2" fill="url(#ng)" stroke="#c99a00" stroke-width="1.2"/><path d="M1 6.5 H5.2 V11" fill="none" stroke="#c99a00" stroke-width="1"/><path d="M1.5 10.5 L4.5 7.5" stroke="#8a6a00" stroke-width="0.8"/></svg>
<div class="a" style="left:473px;top:630px;width:640px;height:34px;background:linear-gradient(#fafafa,#f0f0f0)"></div>
<div class="hl" style="left:474px;top:629px;width:638px;background:#b9b9b9"></div>
<div class="btn" style="left:642px;top:638px;width:77px">Acknowledge</div>
<div class="btn" style="left:725px;top:638px;width:140px">Acknowledge Until Normal</div>
<div class="btn" style="left:871px;top:638px;width:40px">Clear</div>
<div class="btn" style="left:917px;top:638px;width:135px">Find Historic Occurrences</div>
<div class="btn" style="left:1058px;top:638px;width:47px">Cancel</div>
<svg class="a" style="left:0;top:0" width="1121" height="678"><defs><filter id="sh" x="-20%" y="-50%" width="140%" height="200%"><feGaussianBlur stdDeviation="1.5"/></filter></defs><ellipse cx="66" cy="453" rx="26" ry="10" fill="none" stroke="rgba(0,0,0,0.25)" stroke-width="2.5" filter="url(#sh)"/><ellipse cx="64" cy="451" rx="26" ry="10" fill="none" stroke="#111" stroke-width="2"/><line x1="107" y1="451.5" x2="268" y2="437.5" stroke="#222" stroke-width="1.8"/><path d="M281 436.5 L267 431.5 L268.5 443.5 Z" fill="#222"/><ellipse cx="300.5" cy="440" rx="10.5" ry="12" fill="none" stroke="#111" stroke-width="2"/><line x1="320" y1="435" x2="503" y2="454" stroke="#222" stroke-width="1.8"/><path d="M513.5 455 L503 449.5 L502 460 Z" fill="#222"/></svg>
<div class="a" style="left:0;top:0;width:1121px;height:2px;background:#b5b5b5"></div>
<div class="a" style="left:0;top:0;width:2px;height:678px;background:#b5b5b5"></div>
<div class="a" style="left:1119px;top:0;width:2px;height:678px;background:#b5b5b5"></div>
<div class="a" style="left:0;top:676px;width:1121px;height:2px;background:#b5b5b5"></div>
</body></html>
